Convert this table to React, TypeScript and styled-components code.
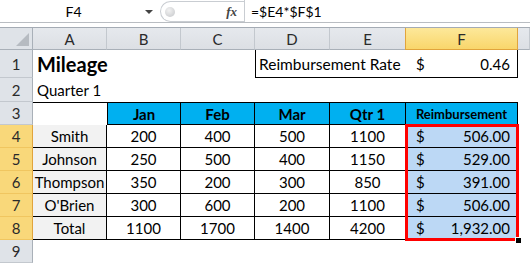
import React from "react";
import styled, { createGlobalStyle } from "styled-components";

const Global = createGlobalStyle`
  html, body { margin: 0; padding: 0; background: #fff; }
  body { font-family: Lato, "Liberation Sans", sans-serif; }
`;

const FONT = `Lato, "Liberation Sans", sans-serif`;

const Page = styled.div`
  width: 530px;
  height: 263px;
  overflow: hidden;
  background: #fff;
  font-family: ${FONT};
`;

const FormulaBar = styled.div`
  display: flex;
  align-items: stretch;
  height: 23px;
  border-bottom: 1px solid #b9bdc2;
  box-sizing: border-box;
  background: #fff;
`;

const NameBox = styled.div`
  width: 160px;
  display: flex;
  align-items: center;
  font-size: 14px;
  color: #000;
`;

const NameText = styled.span`
  flex: 1;
  text-align: center;
  padding-left: 2px;
`;

const DropArrow = styled.span`
  width: 0;
  height: 0;
  border-left: 4px solid transparent;
  border-right: 4px solid transparent;
  border-top: 4px solid #444;
  margin-right: 7px;
  margin-top: 1px;
`;

const FxArea = styled.div`
  width: 84px;
  display: flex;
  align-items: center;
  border: 1px solid #c9cdd2;
  border-right: none;
  border-radius: 11px 0 0 11px;
  margin: 1px 0 0 0;
  box-sizing: border-box;
  height: 21px;
`;

const Grip = styled.span`
  width: 10px;
  height: 10px;
  border-radius: 50%;
  background: radial-gradient(circle at 40% 35%, #f2f2f2, #c4c6c9);
  margin-left: 4px;
`;

const Fx = styled.span`
  margin-left: auto;
  margin-right: 7px;
  font-family: "Liberation Serif", serif;
  font-style: italic;
  font-weight: bold;
  font-size: 13px;
  color: #444;
`;

const FormulaText = styled.div`
  flex: 1;
  border-left: 1px solid #c9cdd2;
  display: flex;
  align-items: center;
  padding-left: 6px;
  font-size: 14px;
  color: #000;
`;

const Strip = styled.div`
  height: 4px;
  background: #fff;
  border-bottom: 1px solid #a4abb4;
  box-sizing: content-box;
`;

const Sheet = styled.div`
  position: relative;
  display: grid;
  grid-template-columns: 33px 74px 74px 74px 75px 76px 112px 12px;
  grid-template-rows: 22px 28px 24px 23px repeat(6, 23px);
`;

const Corner = styled.div`
  background: #dfe3e8;
  border-right: 1px solid #a9b0b8;
  border-bottom: 1px solid #a9b0b8;
  box-sizing: border-box;
  position: relative;
  &::after {
    content: "";
    position: absolute;
    right: 3px;
    bottom: 3px;
    width: 0;
    height: 0;
    border-left: 13px solid transparent;
    border-bottom: 13px solid #b6bbc1;
  }
`;

const ColHeader = styled.div<{ $sel?: boolean }>`
  box-sizing: border-box;
  display: flex;
  align-items: center;
  justify-content: center;
  font-size: 15px;
  color: #2a2a2a;
  background: ${(p) =>
    p.$sel ? "linear-gradient(#fde89a, #f9d66b)" : "linear-gradient(#e6e9ed, #dcdfe4)"};
  border-right: 1px solid ${(p) => (p.$sel ? "#e1a43c" : "#c3c8ce")};
  border-bottom: 1px solid ${(p) => (p.$sel ? "#e1a43c" : "#a9b0b8")};
  ${(p) => (p.$sel ? "border-left: 1px solid #e1a43c; margin-left: -1px;" : "")}
`;

const RowHeader = styled.div<{ $sel?: boolean }>`
  box-sizing: border-box;
  display: flex;
  align-items: center;
  justify-content: center;
  font-size: 15px;
  color: #2a2a2a;
  background: ${(p) => (p.$sel ? "#f9d87a" : "#dfe3e8")};
  border-right: 1px solid ${(p) => (p.$sel ? "#e1a43c" : "#a9b0b8")};
  border-bottom: 1px solid ${(p) => (p.$sel ? "#f0c660" : "#c3c8ce")};
`;

type CellProps = {
  $bg?: string;
  $align?: "left" | "center" | "right";
  $bold?: boolean;
  $size?: number;
  $bt?: boolean;
  $br?: boolean;
  $bb?: boolean;
  $bl?: boolean;
  $pad?: number;
};

const Cell = styled.div<CellProps>`
  box-sizing: border-box;
  display: flex;
  align-items: center;
  justify-content: ${(p) =>
    p.$align === "center" ? "center" : p.$align === "right" ? "flex-end" : "flex-start"};
  padding: 0 ${(p) => p.$pad ?? 4}px;
  background: ${(p) => p.$bg ?? "transparent"};
  font-size: ${(p) => p.$size ?? 15}px;
  font-weight: ${(p) => (p.$bold ? 700 : 400)};
  color: #000;
  white-space: nowrap;
  overflow: visible;
  border-top: ${(p) => (p.$bt ? "1px solid #000" : "none")};
  border-right: ${(p) => (p.$br ? "1px solid #000" : "none")};
  border-bottom: ${(p) => (p.$bb ? "1px solid #000" : "none")};
  border-left: ${(p) => (p.$bl ? "1px solid #000" : "none")};
`;

const Money = styled(Cell)`
  justify-content: space-between;
  padding: 0 7px 0 10px;
`;

const Selection = styled.div`
  position: absolute;
  grid-column: 7 / 8;
  grid-row: 5 / 10;
  top: -1px;
  left: -1px;
  right: -1px;
  bottom: -1px;
  border: 3px solid #ff0000;
  pointer-events: none;
  z-index: 2;
`;

const FillHandle = styled.span`
  position: absolute;
  right: -5px;
  bottom: -5px;
  width: 5px;
  height: 5px;
  background: #000;
  border: 1px solid #fff;
  border-width: 1px 0 0 1px;
`;

const LIGHT_BLUE = "#bcd8f5";
const HEAD_BLUE = "#00b0f0";
const NAME_GREY = "#f2f2f2";

const cols = ["A", "B", "C", "D", "E", "F"];

const data = [
  { name: "Smith", v: ["200", "400", "500", "1100"], r: "506.00" },
  { name: "Johnson", v: ["250", "500", "400", "1150"], r: "529.00" },
  { name: "Thompson", v: ["350", "200", "300", "850"], r: "391.00" },
  { name: "O'Brien", v: ["300", "600", "200", "1100"], r: "506.00" },
  { name: "Total", v: ["1100", "1700", "1400", "4200"], r: "1,932.00" },
];

export default function App() {
  return (
    <Page>
      <Global />
      <FormulaBar>
        <NameBox>
          <NameText>F4</NameText>
          <DropArrow />
        </NameBox>
        <FxArea>
          <Grip />
          <Fx>fx</Fx>
        </FxArea>
        <FormulaText>=$E4*$F$1</FormulaText>
      </FormulaBar>
      <Strip />
      <Sheet>
        <Corner />
        {cols.map((c) => (
          <ColHeader key={c} $sel={c === "F"}>
            {c}
          </ColHeader>
        ))}
        <ColHeader />

        {/* Row 1 */}
        <RowHeader>1</RowHeader>
        <Cell $bold $size={20} $pad={4}>
          Mileage
        </Cell>
        <Cell />
        <Cell />
        <Cell $bl $bb $pad={3} $size={15.5}>
          Reimbursement Rate
        </Cell>
        <Cell $bb />
        <Money $bb $br>
          <span>$</span>
          <span>0.46</span>
        </Money>
        <Cell />

        {/* Row 2 */}
        <RowHeader>2</RowHeader>
        <Cell $pad={4}>Quarter 1</Cell>
        <Cell />
        <Cell />
        <Cell />
        <Cell />
        <Cell />
        <Cell />

        {/* Row 3 */}
        <RowHeader>3</RowHeader>
        <Cell $bt />
        {["Jan", "Feb", "Mar", "Qtr 1"].map((h, i) => (
          <Cell key={h} $bg={HEAD_BLUE} $bold $align="center" $bt $br $bb $bl={i === 0}>
            {h}
          </Cell>
        ))}
        <Cell $bg={HEAD_BLUE} $bold $size={13} $align="center" $bt $br $bb>
          Reimbursement
        </Cell>
        <Cell />

        {/* Rows 4-8 */}
        {data.map((row, ri) => (
          <React.Fragment key={row.name}>
            <RowHeader $sel>{ri + 4}</RowHeader>
            <Cell $bg={NAME_GREY} $align="center" $br $bb $pad={0}>
              {row.name}
            </Cell>
            {row.v.map((v, vi) => (
              <Cell key={vi} $align="center" $br $bb>
                {v}
              </Cell>
            ))}
            <Money $bg={LIGHT_BLUE} $br $bb>
              <span>$</span>
              <span>{row.r}</span>
            </Money>
            <Cell />
          </React.Fragment>
        ))}

        {/* Row 9 */}
        <RowHeader>9</RowHeader>
        <Cell />
        <Cell />
        <Cell />
        <Cell />
        <Cell />
        <Cell />
        <Cell />

        <Selection>
          <FillHandle />
        </Selection>
      </Sheet>
    </Page>
  );
}
